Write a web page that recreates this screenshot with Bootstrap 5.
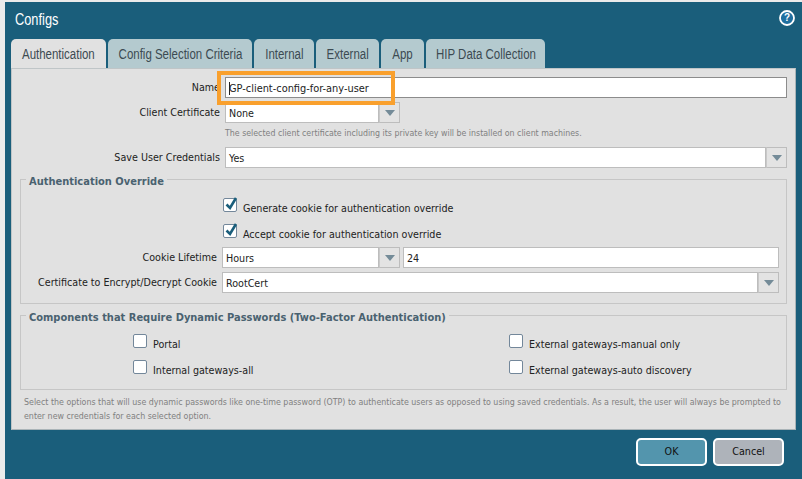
<!DOCTYPE html>
<html lang="en"><head><meta charset="utf-8"><title>Configs</title>
<link rel="stylesheet" href="https://cdn.jsdelivr.net/npm/bootstrap@5.3.0/dist/css/bootstrap.min.css">
<style>
html,body{height:100%;overflow:hidden}
body{background:#ebebeb;font-family:"DejaVu Sans Condensed","DejaVu Sans",sans-serif;font-size:10.65px;color:#222;padding:2px 0 0 5px}
.win{background:#1a5e7b;height:477px;padding:0 6px 0 6px}
.win-head{height:37px;padding:9px 4px 0}
.win-title{display:inline-block;font:16px "Liberation Sans",sans-serif;color:#fff;transform:scaleX(.8);transform-origin:left center}
.help{width:16px;height:16px;margin:-1px -3px 0 0}
.tabs{height:29px;gap:2px}
.tb{height:29px;font:14px "Liberation Sans",sans-serif;color:#3c4a52;background:#b4cacf;border-radius:5px 5px 0 0;padding-top:7px;white-space:nowrap;flex:none}
.tb span{display:inline-block;transform:scaleX(.82)}
.tb.on{background:#e1e1e1}
.tb:nth-child(1){width:95px}.tb:nth-child(2){width:144px}.tb:nth-child(3){width:60px}.tb:nth-child(4){width:63px}.tb:nth-child(5){width:43px}.tb:nth-child(6){width:119px}
.pane{background:#e1e1e1;height:362px;border:1px solid #aab4b8;border-top-color:#bfc5c7;border-left-color:#bfc5c7;padding:8px 8px 0;position:relative}
.lbl{width:205px;text-align:right;padding-right:5px;line-height:21px;flex:none}
.fld{height:21px;background:#fff;border:1px solid #bdbdbd;padding:0 3px;line-height:21px;min-width:0}
.fld-name{border-color:#8c8c8c;font-size:10.9px}
.arrow{width:21px;height:21px;border:1px solid #bdbdbd;border-left:1px solid #c9c9c9;background:#e3e3e3;flex:none}
.arrow i{border-left:5px solid transparent;border-right:5px solid transparent;border-top:6px solid #748b98}
.note{color:#808080;font-size:8.75px}
.box{border:1px solid #c6c6c6;position:relative}
.box-cap{position:absolute;left:5px;top:-5px;background:#e1e1e1;padding:0 3px;font-weight:700;font-size:11px;line-height:13px;color:#4a6270;white-space:nowrap}
.tick{width:14px;height:14px;background:#fff;border:1px solid #73879a;border-radius:2px;flex:none;margin-right:6px}
.tick svg{display:block;margin:-3px 0 0 0}
.chk{height:14px;line-height:14px}
.tt{margin-top:4px;white-space:nowrap}
.hl{position:absolute;left:205px;top:2px;width:178px;height:34px;border:4px solid #f9a02d;pointer-events:none}
.cur{display:inline-block;width:1px;height:13px;background:#222;vertical-align:-3px;margin-right:-1px}
.act{width:71px;height:28px;border:2px solid #fff;border-radius:5px;color:#111;font-size:10.65px;padding:0}
.act.ok{background:#5395ad}.act.no{background:#aeb3ba}
.act:hover{color:#111}
.acts{margin-top:8px;padding-right:12px;gap:6px}
.m4{margin-top:4px}
.hint1{margin:5px 0 0 205px;line-height:11px}
.m8{margin-top:8px}
.box1{height:125px;margin-top:11px}
.box2{height:75px;margin-top:11px}
.c1{margin:18px 0 0 202px}
.c2{margin:12px 0 0 202px}
.lbl.in{width:201px}
.w1{width:154px}.w2{width:157px}.w3{width:376px;margin-left:3px}.w4{width:536px}
.m9{margin-top:9px}
.cols{margin-top:18px;padding-left:112px}
.colL{width:376px}
.m12{margin-top:12px}
.hint2{margin:6px 0 0 4px;line-height:13.5px;white-space:nowrap;font-size:8.8px}
</style></head><body>
<div class="win">
 <div class="win-head d-flex justify-content-between align-items-start">
  <span class="win-title">Configs</span>
  <svg class="help" viewBox="0 0 16 16"><circle cx="8" cy="8" r="7" fill="#1f6f9f" stroke="#fff" stroke-width="1.8"/><text x="8" y="11.4" font-size="10" font-weight="700" text-anchor="middle" fill="#fff" font-family="Liberation Sans">?</text></svg>
 </div>
 <div class="tabs d-flex">
  <div class="tb on text-center"><span>Authentication</span></div><div class="tb d-flex justify-content-center"><span>Config Selection Criteria</span></div><div class="tb text-center"><span>Internal</span></div><div class="tb text-center"><span>External</span></div><div class="tb text-center"><span>App</span></div><div class="tb d-flex justify-content-center"><span>HIP Data Collection</span></div>
 </div>
 <div class="pane">
  <div class="hl"></div>
  <div class="d-flex"><div class="lbl">Name</div><div class="fld fld-name flex-grow-1"><span class="cur"></span>GP-client-config-for-any-user</div></div>
  <div class="d-flex m4"><div class="lbl">Client Certificate</div><div class="fld w1">None</div><div class="arrow d-flex align-items-center justify-content-center"><i></i></div></div>
  <div class="note hint1">The selected client certificate including its private key will be installed on client machines.</div>
  <div class="d-flex m8"><div class="lbl">Save User Credentials</div><div class="fld flex-grow-1">Yes</div><div class="arrow d-flex align-items-center justify-content-center"><i></i></div></div>
  <div class="box box1">
   <div class="box-cap">Authentication Override</div>
   <div class="d-flex chk c1"><span class="tick"><svg width="14" height="16" viewBox="0 0 14 16"><path d="M2.5 8.5 6 12l6-10" fill="none" stroke="#1a5e7b" stroke-width="2.6"/></svg></span><span class="tt">Generate cookie for authentication override</span></div>
   <div class="d-flex chk c2"><span class="tick"><svg width="14" height="16" viewBox="0 0 14 16"><path d="M2.5 8.5 6 12l6-10" fill="none" stroke="#1a5e7b" stroke-width="2.6"/></svg></span><span class="tt">Accept cookie for authentication override</span></div>
   <div class="d-flex m9"><div class="lbl in">Cookie Lifetime</div><div class="fld w2">Hours</div><div class="arrow d-flex align-items-center justify-content-center"><i></i></div><div class="fld w3">24</div></div>
   <div class="d-flex m4"><div class="lbl in">Certificate to Encrypt/Decrypt Cookie</div><div class="fld w4">RootCert</div><div class="arrow d-flex align-items-center justify-content-center"><i></i></div></div>
  </div>
  <div class="box box2">
   <div class="box-cap">Components that Require Dynamic Passwords (Two-Factor Authentication)</div>
   <div class="d-flex cols">
    <div class="colL"><div class="d-flex chk"><span class="tick"></span><span class="tt">Portal</span></div><div class="d-flex chk m12"><span class="tick"></span><span class="tt">Internal gateways-all</span></div></div>
    <div><div class="d-flex chk"><span class="tick"></span><span class="tt">External gateways-manual only</span></div><div class="d-flex chk m12"><span class="tick"></span><span class="tt">External gateways-auto discovery</span></div></div>
   </div>
  </div>
  <div class="note hint2">Select the options that will use dynamic passwords like one-time password (OTP) to authenticate users as opposed to using saved credentials. As a result, the user will always be prompted to<br>enter new credentials for each selected option.</div>
 </div>
 <div class="d-flex justify-content-end acts">
  <button class="btn act ok" type="button">OK</button><button class="btn act no" type="button">Cancel</button>
 </div>
</div>
<script src="https://cdn.jsdelivr.net/npm/bootstrap@5.3.0/dist/js/bootstrap.bundle.min.js"></script>
</body></html>
